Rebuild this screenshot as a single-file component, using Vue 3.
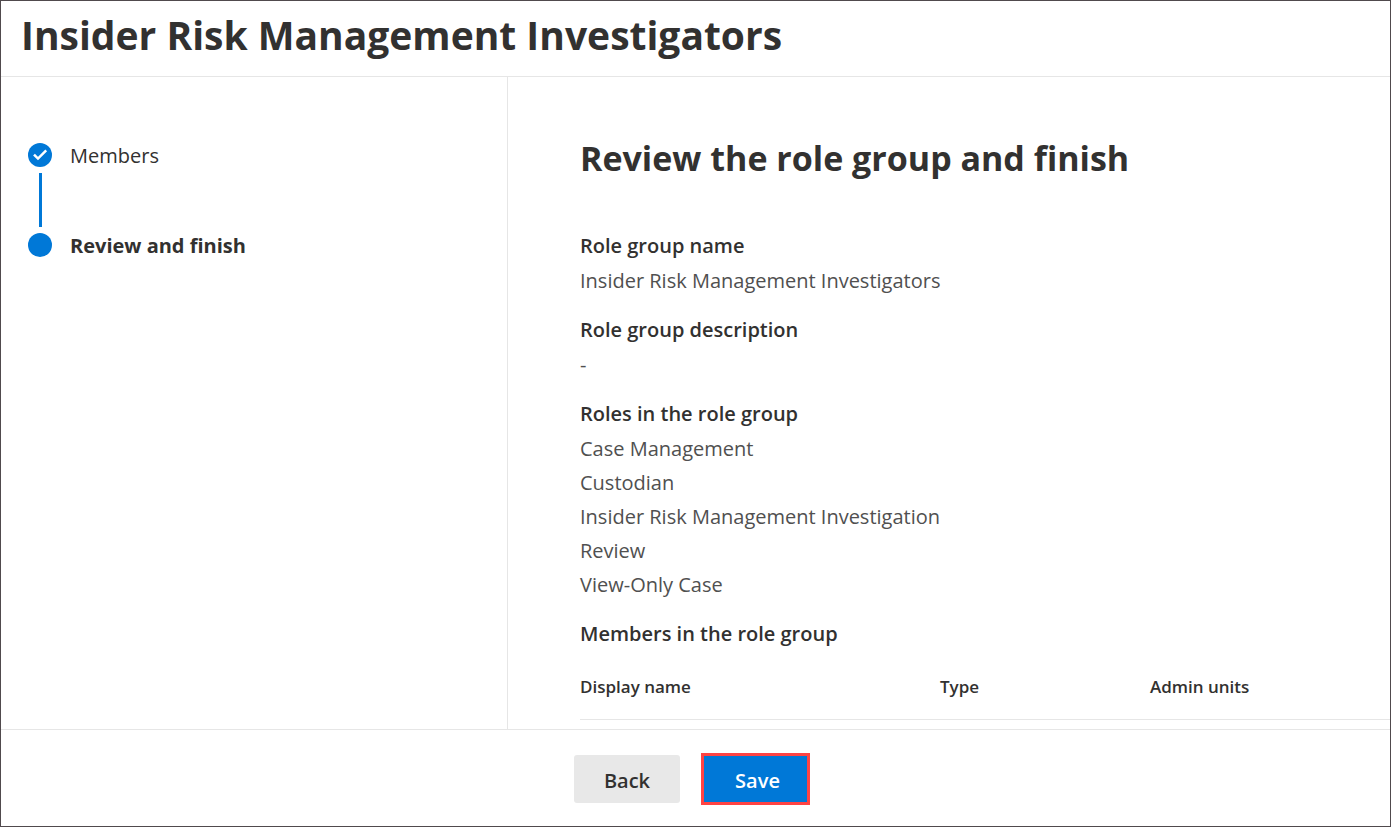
<script setup>
const title = 'Insider Risk Management Investigators'
const sections = [
  { label: 'Role group name', values: ['Insider Risk Management Investigators'] },
  { label: 'Role group description', values: ['-'] },
  {
    label: 'Roles in the role group',
    values: [
      'Case Management',
      'Custodian',
      'Insider Risk Management Investigation',
      'Review',
      'View-Only Case',
    ],
  },
]
</script>

<template>
  <div class="wizard">
    <header class="top">
      <h1>{{ title }}</h1>
    </header>

    <div class="body">
      <nav class="steps" aria-label="Wizard steps">
        <ol>
          <li class="step">
            <svg class="dot" viewBox="0 0 24 24" aria-hidden="true">
              <circle cx="12" cy="12" r="12" fill="#0078d7" />
              <path d="M6 11.6 10 15.6 18.2 7.4" fill="none" stroke="#fff" stroke-width="2.5" />
            </svg>
            <span>Members</span>
          </li>
          <li class="link" aria-hidden="true"></li>
          <li class="step current" aria-current="step">
            <svg class="dot" viewBox="0 0 24 24" aria-hidden="true">
              <circle cx="12" cy="12" r="12" fill="#0078d7" />
            </svg>
            <span>Review and finish</span>
          </li>
        </ol>
      </nav>

      <main class="review">
        <h2>Review the role group and finish</h2>
        <section v-for="s in sections" :key="s.label" class="group">
          <h3>{{ s.label }}</h3>
          <p v-for="v in s.values" :key="v">{{ v }}</p>
        </section>
        <h3 id="members-title">Members in the role group</h3>
        <table aria-labelledby="members-title">
          <thead>
            <tr>
              <th class="name" scope="col">Display name</th>
              <th class="type" scope="col">Type</th>
              <th scope="col">Admin units</th>
            </tr>
          </thead>
        </table>
      </main>
    </div>

    <footer class="actions">
      <button type="button" class="btn">Back</button>
      <span class="highlight">
        <button type="button" class="btn primary">Save</button>
      </span>
    </footer>
  </div>
</template>

<style>
body {
  background: #fff;
}
</style>

<style scoped>
* {
  box-sizing: border-box;
}
h1,
h2,
h3,
p,
ol {
  margin: 0;
  padding: 0;
}
.wizard {
  display: grid;
  grid-template-rows: auto 1fr auto;
  min-height: 100vh;
  border: 1px solid #504a4d;
  background: #fff;
  color: #323130;
  font-family: "Open Sans", "Noto Sans", sans-serif;
  font-size: 20px;
}
.top {
  padding: 6px 20px 13px;
  border-bottom: 1px solid #e6e6e6;
}
h1 {
  font-size: 39px;
  line-height: 56px;
  font-weight: 700;
}
.body {
  display: grid;
  grid-template-columns: 507px 1fr;
}
.steps {
  padding: 62px 27px;
  border-right: 1px solid #e6e6e6;
}
ol {
  list-style: none;
}
.step {
  display: flex;
  align-items: center;
  gap: 18px;
  height: 32px;
}
.dot {
  width: 24px;
  height: 24px;
}
.link {
  width: 3px;
  height: 54px;
  margin: 2px 0 2px 11px;
  background: #0078d7;
}
.current {
  font-weight: 700;
}
.review {
  padding: 57px 0 9px 72px;
}
h2 {
  margin-bottom: 46px;
  font-size: 34px;
  line-height: 48px;
  font-weight: 700;
}
h3 {
  font-size: 20px;
  line-height: 36px;
  font-weight: 600;
}
p {
  line-height: 34px;
  color: #505050;
}
.group {
  margin-bottom: 14px;
}
table {
  width: 100%;
  border-collapse: collapse;
  table-layout: fixed;
}
th {
  height: 67px;
  padding: 3px 0 0;
  border-bottom: 1px solid #e6e6e6;
  font-size: 17px;
  font-weight: 600;
  text-align: left;
}
.name {
  width: 360px;
}
.type {
  width: 210px;
}
.actions {
  display: flex;
  align-items: center;
  gap: 21px;
  padding: 23px 20px 21px 573px;
  border-top: 1px solid #e6e6e6;
}
.btn {
  width: 106px;
  height: 48px;
  padding: 2px 0 0;
  border: 0;
  border-radius: 3px;
  background: #e8e8e8;
  color: #323130;
  font: inherit;
  font-weight: 600;
}
.highlight {
  display: flex;
  border: 3px solid #ff4343;
  background: #0078d7;
}
.primary {
  width: 103px;
  height: 46px;
  padding-left: 4px;
  background: #0078d7;
  color: #fff;
}
</style>
